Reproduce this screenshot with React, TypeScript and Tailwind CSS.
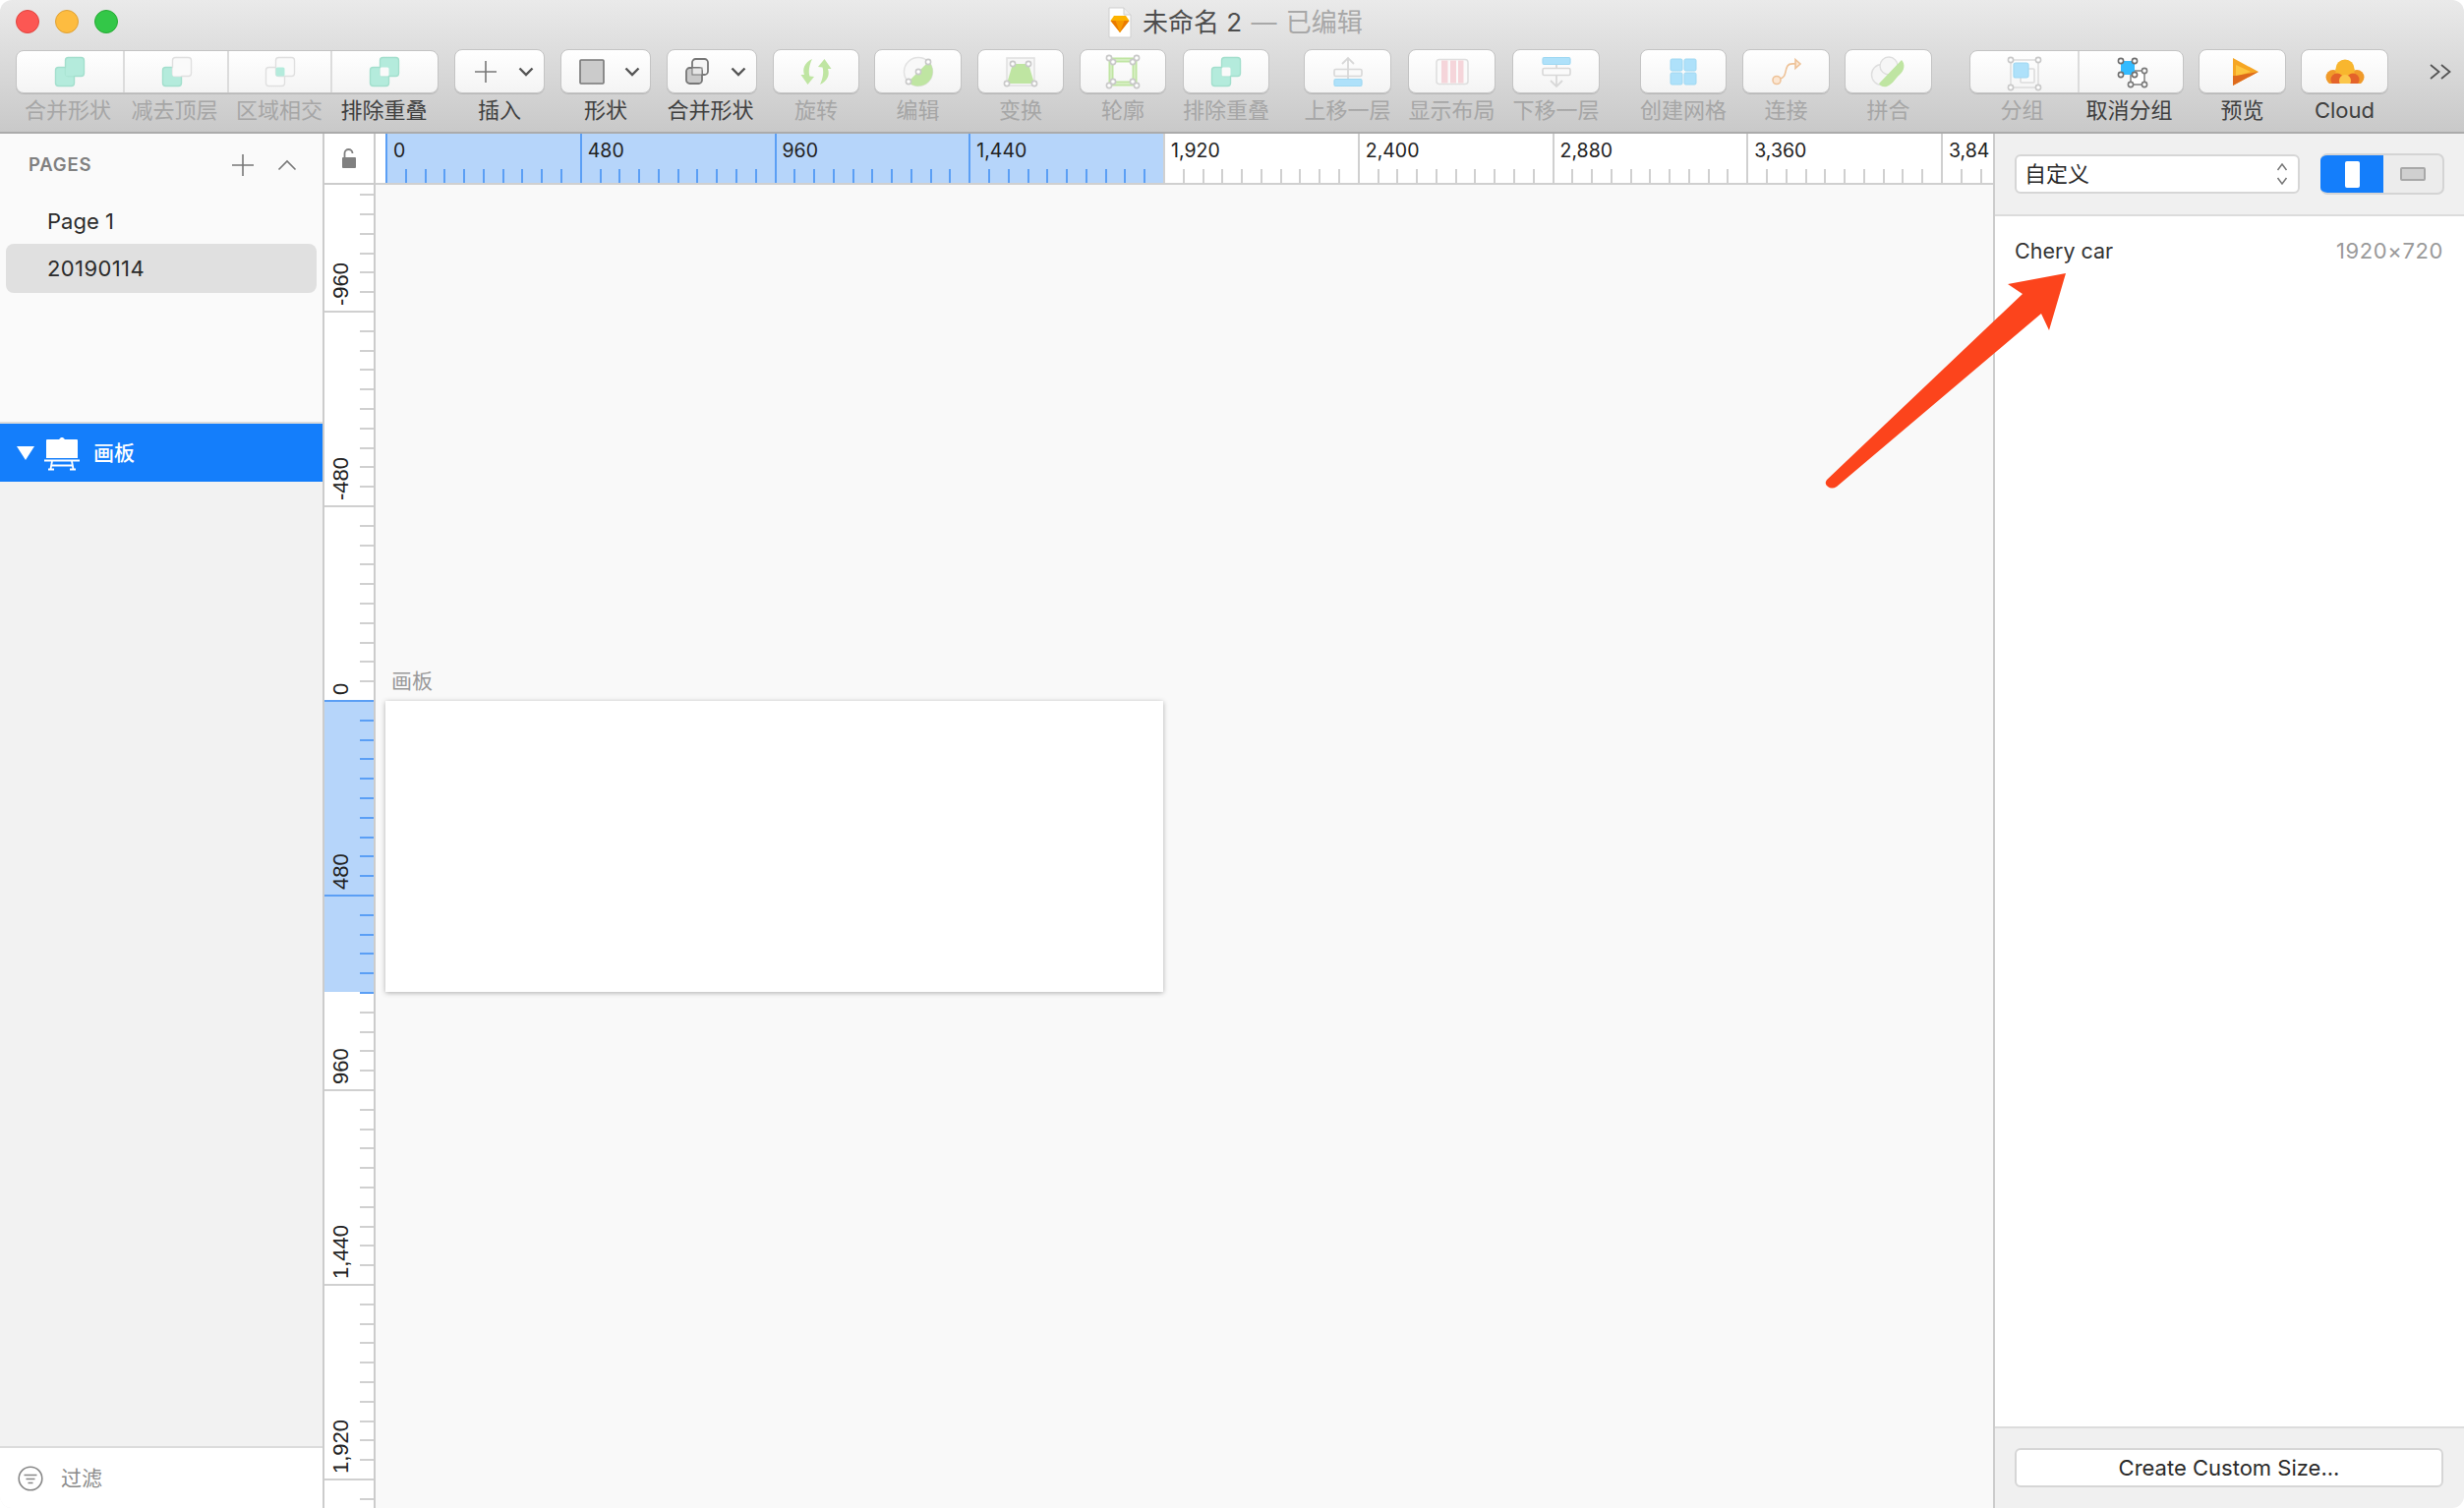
import type { ReactNode } from "react";

const TEAL = "#b4ebdc";
const TEAL_LINE = "#a3dfcd";
const GREEN = "#bfe5a2";
const SKY = "#aee1fa";
const SKY_LINE = "#9fd8f2";
const LINE = "#d8d8d8";

function Icon({ children, size = 40 }: { children: ReactNode; size?: number }) {
  const half = size / 2;
  return (
    <svg width={size} height={size} viewBox={`${-half} ${-half} ${size} ${size}`} className="shrink-0">
      {children}
    </svg>
  );
}

function Node({ x, y, color = "#c9c9c9" }: { x: number; y: number; color?: string }) {
  return <circle cx={x} cy={y} r={2.6} fill="#fff" stroke={color} strokeWidth={1.6} />;
}

function Squares({ a, b, mid, stroke }: { a: string; b: string; mid: string; stroke?: string }) {
  return (
    <Icon>
      <rect x={-14.5} y={-4.5} width={19} height={19} rx={3} fill={a} stroke={a === TEAL ? TEAL_LINE : "#e0e0e0"} strokeWidth={1.4} />
      <rect x={-4.5} y={-14.5} width={19} height={19} rx={3} fill={b} stroke={b === TEAL ? TEAL_LINE : stroke || "#e0e0e0"} strokeWidth={1.4} />
      <rect x={-4.5} y={-4.5} width={9} height={9} rx={1.5} fill={mid} />
    </Icon>
  );
}

const Merge = () => <Squares a={TEAL} b={TEAL} mid={TEAL} />;
const Subtract = () => <Squares a={TEAL} b="#fafafa" mid="#fafafa" />;
const Intersect = () => <Squares a="#fafafa" b="#fafafa" mid={TEAL} />;
const Exclude = () => <Squares a={TEAL} b={TEAL} mid="#fafafa" />;

function Chevron() {
  return (
    <svg width="16" height="10" viewBox="0 0 16 10" className="shrink-0">
      <path d="M1.5 1.5 8 8l6.5-6.5" fill="none" stroke="#555" strokeWidth="2.4" />
    </svg>
  );
}

function Plus() {
  return (
    <svg width="26" height="26" viewBox="0 0 26 26" className="shrink-0">
      <path d="M13 2v22M2 13h22" stroke="#777" strokeWidth="1.6" />
    </svg>
  );
}

function ShapeIcon() {
  return (
    <svg width="26" height="28" viewBox="0 0 26 28" className="shrink-0">
      <rect x="1" y="2" width="24" height="24" fill="#cbcbcb" stroke="#777" strokeWidth="1.6" rx="1" />
    </svg>
  );
}

function CombineIcon() {
  return (
    <svg width="26" height="30" viewBox="0 0 26 30" className="-ml-[1px] shrink-0">
      <rect x="8" y="2" width="16" height="16" rx="3.5" fill="#f6f6f6" stroke="#777" strokeWidth="1.8" />
      <rect x="2" y="11" width="16" height="16" rx="3.5" fill="#c9c9c9" stroke="#777" strokeWidth="1.8" />
      <rect x="8" y="11" width="10" height="7" fill="#e6e6e6" stroke="#777" strokeWidth="1" />
    </svg>
  );
}

function Rotate() {
  const half = "M-4-13C-12-9-14-3-12 3L-15.5 3-8.5 13-2 5-6.5 4.5C-8 0-7-7-4-13Z";
  return (
    <Icon>
      <path d={half} fill={GREEN} />
      <path d={half} fill={GREEN} transform="rotate(180)" />
    </Icon>
  );
}

function Edit() {
  return (
    <Icon>
      <circle r={14.5} fill="#f8f8f8" stroke="#e2e2e2" strokeWidth={1.5} />
      <path d="M-10.6 10.6A15 15 0 0 0 10.6-10.6Z" fill={GREEN} />
      <Node x={-10} y={10} />
      <Node x={0} y={0} />
      <Node x={10} y={-10} />
    </Icon>
  );
}

function Transform() {
  return (
    <Icon>
      <rect x={-14} y={-14} width={28} height={28} fill="#f6f6f6" stroke="#e0e0e0" strokeWidth={1.5} />
      <path d="M-8-8H8L14 12H-14Z" fill={GREEN} />
      <Node x={-8} y={-8} />
      <Node x={8} y={-8} />
      <Node x={-14} y={12} />
      <Node x={14} y={12} />
    </Icon>
  );
}

function Outline() {
  return (
    <Icon>
      <rect x={-12} y={-12} width={24} height={24} fill="none" stroke={GREEN} strokeWidth={5} />
      <path d="M-12-12H12V12H-12Z" fill="none" stroke="#e8f5dc" strokeWidth={1} />
      {[-14, 14].map((x) => [-14, 14].map((y) => <Node key={`${x}${y}`} x={x} y={y} />))}
      {[-10, 10].map((x) => [-10, 10].map((y) => <Node key={`i${x}${y}`} x={x} y={y} />))}
    </Icon>
  );
}

function MoveUp() {
  return (
    <Icon>
      <path d="M0 8V-14M-6-8 0-14 6-8" fill="none" stroke={LINE} strokeWidth={1.8} />
      <rect x={-14} y={-2.5} width={28} height={7} rx={1.5} fill="#fafafa" stroke={LINE} strokeWidth={1.6} />
      <rect x={-14} y={7.5} width={28} height={7} rx={1.5} fill={SKY} stroke={SKY_LINE} strokeWidth={1.2} />
      <path d="M0-2V4" stroke={LINE} strokeWidth={1.8} />
    </Icon>
  );
}

function MoveDown() {
  return (
    <Icon>
      <path d="M0-8V15M-6 9 0 15 6 9" fill="none" stroke={LINE} strokeWidth={1.8} />
      <rect x={-14} y={-14.5} width={28} height={7} rx={1.5} fill={SKY} stroke={SKY_LINE} strokeWidth={1.2} />
      <rect x={-14} y={-3.5} width={28} height={7} rx={1.5} fill="#fafafa" stroke={LINE} strokeWidth={1.6} />
    </Icon>
  );
}

function LayoutIcon() {
  return (
    <Icon>
      <rect x={-16} y={-12.5} width={32} height={25} rx={3} fill="#fafafa" stroke="#dfdfdf" strokeWidth={1.6} />
      <rect x={-11} y={-11.5} width={6.5} height={23} fill="#f5d5da" />
      <rect x={-2} y={-11.5} width={6} height={23} fill="#f5d5da" />
      <rect x={6} y={-11.5} width={5.5} height={23} fill="#f5d5da" />
    </Icon>
  );
}

function Grid() {
  return (
    <Icon>
      {[-13, 1].map((x) =>
        [-13, 1].map((y) => (
          <rect key={`${x}${y}`} x={x} y={y} width={12} height={12} rx={1.5} fill={SKY} stroke={SKY_LINE} strokeWidth={1} />
        )),
      )}
    </Icon>
  );
}

function Connect() {
  return (
    <Icon>
      <path d="M-7 7C0 6-2-1 1-6 3-9 6-8 9-8" fill="none" stroke="#eec298" strokeWidth={1.6} />
      <circle cx={-10} cy={8.5} r={4} fill="#fbe6d2" stroke="#eec298" strokeWidth={1.6} />
      <path d="M9-12.5 14-8 9-3.5Z" fill="#fbe6d2" stroke="#eec298" strokeWidth={1.6} />
    </Icon>
  );
}

function Flatten() {
  return (
    <Icon>
      <circle cx={-7} cy={3} r={10.5} fill="#f6f6f6" stroke="#dedede" strokeWidth={1.4} />
      <circle cx={0} cy={-6} r={9} fill="#f6f6f6" stroke="#dedede" strokeWidth={1.4} />
      <path d="M13-12C17-8 16-1 11 3 7 6 5 12-2 15-6 16-9 14-10 12Z" fill={GREEN} />
    </Icon>
  );
}

function Group() {
  return (
    <Icon>
      <rect x={-14} y={-12} width={28} height={28} fill="none" stroke="#dedede" strokeWidth={1.6} />
      <rect x={-4} y={-3} width={14} height={14} rx={1} fill="#fafafa" stroke="#dcdcdc" strokeWidth={1.6} />
      <rect x={-11} y={-9} width={15} height={15} rx={2} fill={SKY} stroke={SKY_LINE} strokeWidth={1.2} />
      <Node x={-14} y={-12} />
      <Node x={14} y={-12} />
      <Node x={-14} y={16} />
      <Node x={14} y={16} />
    </Icon>
  );
}

function Ungroup() {
  return (
    <Icon>
      <rect x={-1} y={-1} width={14} height={14} fill="#fff" stroke="#888" strokeWidth={1.6} />
      <Node x={13} y={-1} color="#7a7a7a" />
      <Node x={-1} y={13} color="#7a7a7a" />
      <Node x={13} y={13} color="#7a7a7a" />
      <rect x={-11} y={-11} width={14} height={14} fill="#33bbff" />
      {[-11, 3].map((x) => [-11, 3].map((y) => <Node key={`${x}${y}`} x={x} y={y} color="#6f6f6f" />))}
    </Icon>
  );
}

function Preview() {
  return (
    <Icon>
      <path d="M-10-14 16 0-10 14Z" fill="#f6a623" />
      <path d="M-7-7 8 0-7 5Z" fill="#fdc53e" />
      <path d="M-10 14 16 0-7 4-10 4Z" fill="#de6a1c" />
    </Icon>
  );
}

function Cloud() {
  return (
    <Icon>
      <defs>
        <clipPath id="cloud-base">
          <rect x={-20} y={-20} width={40} height={32} />
        </clipPath>
      </defs>
      <g clipPath="url(#cloud-base)">
        <circle cx={-12} cy={5.5} r={7.5} fill="#f09a2a" />
        <circle cx={12} cy={5.5} r={7.5} fill="#f09a2a" />
        <circle cx={0} cy={-3} r={9.5} fill="#f8b62e" />
        <rect x={-9.5} y={-3} width={19} height={16} fill="#f8b62e" />
        <circle cx={-8} cy={8} r={6.5} fill="#e4632a" />
        <circle cx={8} cy={8} r={6.5} fill="#e4632a" />
        <circle cx={0} cy={9} r={6} fill="#fbc64a" />
      </g>
    </Icon>
  );
}

function ToolButton({ label, active, children, className }: { label: string; active?: boolean; children: ReactNode; className: string }) {
  return (
    <div className={`flex shrink-0 flex-col items-center ${className}`}>
      <div className="flex h-[45px] w-full items-center justify-center rounded-[8px] border border-[#c4c4c4] bg-gradient-to-b from-white to-[#f4f4f4] shadow-[0_1px_0_rgba(0,0,0,0.12)]">
        {children}
      </div>
      <span className={`mt-[4px] whitespace-nowrap text-[22px] leading-[26px] ${active ? "text-[#404040]" : "text-[#a6a6a6]"}`}>{label}</span>
    </div>
  );
}

function DropButton({ label, children, className, labelClass = "" }: { label: string; children: ReactNode; className: string; labelClass?: string }) {
  return (
    <div className={`flex shrink-0 flex-col items-center ${className}`}>
      <div className="flex h-[45px] w-full items-center justify-between rounded-[8px] border border-[#c4c4c4] bg-gradient-to-b from-white to-[#f4f4f4] pl-[18px] pr-[10px] shadow-[0_1px_0_rgba(0,0,0,0.12)]">
        {children}
        <Chevron />
      </div>
      <span className={`mt-[4px] whitespace-nowrap text-[22px] leading-[26px] text-[#404040] ${labelClass}`}>{label}</span>
    </div>
  );
}

function Segmented({ items, className }: { items: { label: string; active?: boolean; icon: ReactNode; w: string }[]; className: string }) {
  return (
    <div className={`flex shrink-0 flex-col ${className}`}>
      <div className="mt-[1px] flex h-[44px] overflow-hidden rounded-[8px] border border-[#c4c4c4] bg-gradient-to-b from-white to-[#f4f4f4] shadow-[0_1px_0_rgba(0,0,0,0.12)]">
        {items.map((item, i) => (
          <div key={item.label + i} className={`flex items-center justify-center ${item.w} ${i > 0 ? "border-l-2 border-[#dcdcdc]" : ""} -ml-[1px] first:ml-[-1px]`}>
            {item.icon}
          </div>
        ))}
      </div>
      <div className="ml-[-2px] mt-[4px] flex">
        {items.map((item, i) => (
          <span
            key={item.label + i}
            className={`text-center whitespace-nowrap text-[22px] leading-[26px] ${item.w} ${item.active ? "text-[#404040]" : "text-[#a6a6a6]"}`}
          >
            {item.label}
          </span>
        ))}
      </div>
    </div>
  );
}

function DocIcon() {
  return (
    <svg width="24" height="32" viewBox="0 0 24 32" className="shrink-0">
      <path d="M1 1h15l7 7v23H1Z" fill="#fff" stroke="#cfcfcf" strokeWidth="1" />
      <path d="M16 1v7h7" fill="#eee" stroke="#cfcfcf" strokeWidth="1" />
      <path d="M6 9h12l3.5 5L12 26 2.5 14Z" fill="#fdb300" />
      <path d="M2.5 14h19L12 26Z" fill="#ea7a00" />
      <path d="M7.5 14h9L12 26Z" fill="#f79a00" />
    </svg>
  );
}

function TitleBar() {
  return (
    <div className="flex h-[50px] items-center pl-[16px]">
      <div className="mb-[6px] flex gap-[16px]">
        <span className="size-[24px] rounded-full border border-[#e0443e] bg-[#fc5753]" />
        <span className="size-[24px] rounded-full border border-[#dea034] bg-[#fdbc40]" />
        <span className="size-[24px] rounded-full border border-[#27aa35] bg-[#33c748]" />
      </div>
      <div className="mb-[4px] ml-[1007px] flex items-center gap-[11px] whitespace-nowrap text-[26px] leading-[32px]">
        <DocIcon />
        <span className="text-[#4d4d4d]">
          未命名 2 <span className="ml-[2px] text-[#a8a8a8]">— <span className="ml-[2px]">已编辑</span></span>
        </span>
      </div>
    </div>
  );
}

function Toolbar() {
  return (
    <div className="flex h-[84px] items-start pl-[16px]">
      <Segmented
        className="w-[430px]"
        items={[
          { label: "合并形状", icon: <Merge />, w: "w-[110px]" },
          { label: "减去顶层", icon: <Subtract />, w: "w-[107px]" },
          { label: "区域相交", icon: <Intersect />, w: "w-[106px]" },
          { label: "排除重叠", active: true, icon: <Exclude />, w: "w-[107px]" },
        ]}
      />
      <DropButton label="插入" className="ml-[16px] w-[92px]"><Plus /></DropButton>
      <DropButton label="形状" className="ml-[16px] w-[92px]"><ShapeIcon /></DropButton>
      <DropButton label="合并形状" className="ml-[16px] w-[92px]" labelClass="mr-[3px]"><CombineIcon /></DropButton>
      <ToolButton label="旋转" className="ml-[16px] w-[88px]"><Rotate /></ToolButton>
      <ToolButton label="编辑" className="ml-[15px] w-[89px]"><Edit /></ToolButton>
      <ToolButton label="变换" className="ml-[16px] w-[88px]"><Transform /></ToolButton>
      <ToolButton label="轮廓" className="ml-[16px] w-[88px]"><Outline /></ToolButton>
      <ToolButton label="排除重叠" className="ml-[17px] w-[88px]"><Exclude /></ToolButton>
      <ToolButton label="上移一层" className="ml-[35px] w-[89px]"><MoveUp /></ToolButton>
      <ToolButton label="显示布局" className="ml-[17px] w-[89px]"><LayoutIcon /></ToolButton>
      <ToolButton label="下移一层" className="ml-[17px] w-[89px]"><MoveDown /></ToolButton>
      <ToolButton label="创建网格" className="ml-[41px] w-[88px]"><Grid /></ToolButton>
      <ToolButton label="连接" className="ml-[16px] w-[89px]"><Connect /></ToolButton>
      <ToolButton label="拼合" className="ml-[15px] w-[89px]"><Flatten /></ToolButton>
      <Segmented
        className="ml-[38px] w-[218px]"
        items={[
          { label: "分组", icon: <Group />, w: "w-[111px]" },
          { label: "取消分组", active: true, icon: <Ungroup />, w: "w-[107px]" },
        ]}
      />
      <ToolButton label="预览" active className="ml-[15px] w-[89px]"><Preview /></ToolButton>
      <ToolButton label="Cloud" active className="ml-[15px] w-[89px]"><Cloud /></ToolButton>
      <svg width="23" height="16" viewBox="0 0 23 16" className="ml-[42px] mt-[15px] shrink-0">
        <path d="M1 1 9.5 8 1 15M12 1 20.5 8 12 15" fill="none" stroke="#555" strokeWidth="1.8" />
      </svg>
    </div>
  );
}

function Sidebar() {
  return (
    <aside className="flex w-[330px] shrink-0 flex-col border-r-2 border-[#cccccc] bg-[#f2f2f2]">
      <div className="h-[295px] border-b-2 border-[#dcdcdc] bg-[#fafafa]">
        <div className="flex h-[63px] items-center pl-[29px] pr-[26px]">
          <span className="flex-1 text-[18.5px] font-semibold tracking-[0.8px] text-[#808080]">PAGES</span>
          <svg width="24" height="24" viewBox="0 0 24 24">
            <path d="M12 1v22M1 12h22" stroke="#777" strokeWidth="1.6" />
          </svg>
          <svg width="20" height="12" viewBox="0 0 20 12" className="ml-[23px]">
            <path d="M1.5 10.5 10 2l8.5 8.5" fill="none" stroke="#777" strokeWidth="1.6" />
          </svg>
        </div>
        <div className="flex h-[49px] items-center pl-[48px] pt-[3px] text-[22px] text-[#2b2b2b]">Page 1</div>
        <div className="mx-[6px] flex h-[50px] items-center rounded-[8px] bg-[#e0e0e0] pl-[42px] pt-[1px] text-[22px] tracking-[0.4px] text-[#2b2b2b]">20190114</div>
      </div>
      <div className="flex h-[59px] items-center bg-[#147efb] pl-[17px] text-white">
        <svg width="18" height="14" viewBox="0 0 18 14">
          <path d="M0 0h18L9 14Z" fill="#fff" />
        </svg>
        <svg width="36" height="36" viewBox="0 0 36 36" className="ml-[10px]">
          <path d="M3 4h12l2-2h2l2 2h12a1 1 0 0 1 1 1v18H2V5a1 1 0 0 1 1-1Z" fill="#fff" />
          <path d="M0 25.5h36" stroke="#fff" strokeWidth="2" />
          <path d="M8 26 6.5 34M28 26 29.5 34M7 30.5h22M4 34.5h6M26 34.5h6" stroke="#fff" strokeWidth="1.8" fill="none" />
        </svg>
        <span className="ml-[14px] text-[21px] font-medium leading-none">画板</span>
      </div>
      <div className="flex-1" />
      <div className="flex h-[63px] items-center border-t-2 border-[#dcdcdc] bg-white pl-[18px]">
        <svg width="26" height="26" viewBox="0 0 26 26">
          <circle cx="13" cy="13" r="11.8" fill="none" stroke="#888" strokeWidth="1.6" />
          <path d="M6.5 9.5h13M8.5 13.5h9M10.5 17.5h5" stroke="#888" strokeWidth="1.6" />
        </svg>
        <span className="ml-[18px] text-[21px] text-[#8a8a8a]">过滤</span>
      </div>
    </aside>
  );
}

const H_LABELS = ["0", "480", "960", "1,440", "1,920", "2,400", "2,880", "3,360", "3,84"];
const V_LABELS = ["-960", "-480", "0", "480", "960", "1,440", "1,920"];
const BLUE_LINE = "#5b9ff5";
const GREY_LINE = "#d0d0d0";

function HorizontalRuler() {
  const ticks: ReactNode[] = [];
  for (let i = 0; i < 84; i++) {
    const x = Math.round(10 + i * 19.775);
    const blue = x <= 800;
    const major = i % 10 === 0;
    ticks.push(<line key={i} x1={x + 1} x2={x + 1} y1={major ? 0 : 36} y2={50} stroke={blue ? BLUE_LINE : GREY_LINE} strokeWidth={2} />);
  }
  return (
    <div className="relative h-[52px] flex-1 overflow-hidden border-b-2 border-[#d0d0d0] bg-white">
      <div className="absolute bottom-[-2px] left-[10px] h-[52px] w-[791px] border-b-2 border-[#4a90e8] bg-[#b6d5fa]" />
      <svg width="1645" height="52" className="absolute left-0 top-0">
        {ticks}
      </svg>
      {H_LABELS.map((label, i) => (
        <span
          key={label}
          className="absolute top-[4px] font-[Inter,sans-serif] text-[19.5px] leading-[26px] text-[#222]"
          style={{ left: 18 + i * 197.75 }}
        >
          {label}
        </span>
      ))}
    </div>
  );
}

function VerticalRuler() {
  const ticks: ReactNode[] = [];
  for (let i = 0; i < 70; i++) {
    const y = Math.round(129 - 198 * 0.6 + i * 19.8);
    const blue = y >= 525 && y <= 822;
    const major = (i - 6) % 10 === 0;
    ticks.push(<line key={i} x1={major ? 0 : 36} x2={50} y1={y} y2={y} stroke={blue ? BLUE_LINE : GREY_LINE} strokeWidth={2} />);
  }
  return (
    <div className="relative w-[52px] shrink-0 overflow-hidden border-r-2 border-[#cccccc] bg-white">
      <div className="absolute left-0 top-[525px] h-[296px] w-[52px] border-r-2 border-[#5b9ff5] bg-[#b6d5fa]" />
      <svg width="50" height="1346" className="absolute left-0 top-0">
        {ticks}
      </svg>
      {V_LABELS.map((label, i) => (
        <span
          key={label}
          className="absolute left-[17px] -translate-x-1/2 -translate-y-full rotate-180 whitespace-nowrap font-['Liberation_Sans',sans-serif] text-[22px] leading-[24px] text-[#222] [writing-mode:vertical-rl]"
          style={{ top: 123 + i * 198 }}
        >
          {label}
        </span>
      ))}
    </div>
  );
}

function Canvas() {
  return (
    <main className="flex min-w-0 flex-1 flex-col">
      <div className="flex">
        <div className="flex h-[52px] w-[52px] shrink-0 items-center justify-center border-b-2 border-r-2 border-[#cccccc] bg-white">
          <svg width="16" height="22" viewBox="0 0 16 22">
            <path d="M3.5 10V6a4 4 0 0 1 8 0" fill="none" stroke="#808080" strokeWidth="1.8" />
            <rect x="1" y="10" width="14" height="11" rx="1" fill="#808080" />
          </svg>
        </div>
        <HorizontalRuler />
      </div>
      <div className="flex min-h-0 flex-1">
        <VerticalRuler />
        <div className="flex-1 bg-[#f9f9f9] pl-[10px] pt-[492px]">
          <div className="ml-[6px] h-[26px] text-[21px] leading-[26px] text-[#999]">画板</div>
          <div className="mt-[7px] h-[296px] w-[791px] bg-white shadow-[0_1px_5px_rgba(0,0,0,0.3)]" />
        </div>
      </div>
    </main>
  );
}

function RightPanel() {
  return (
    <aside className="flex w-[479px] shrink-0 flex-col border-l-2 border-[#cccccc] bg-white">
      <div className="flex h-[84px] items-center border-b-2 border-[#dcdcdc] bg-[#f0f0f0] pl-[20px]">
        <div className="flex h-[40px] w-[290px] items-center justify-between rounded-[6px] border-2 border-[#d6d6d6] bg-white pl-[8px] pr-[10px] text-[22px] text-[#2b2b2b]">
          自定义
          <svg width="12" height="26" viewBox="0 0 12 26">
            <path d="M1.5 9 6 3l4.5 6M1.5 17 6 23l4.5-6" fill="none" stroke="#777" strokeWidth="1.5" />
          </svg>
        </div>
        <div className="ml-[21px] flex h-[42px] w-[126px] overflow-hidden rounded-[7px] border-r-2 border-t-2 border-b-2 border-[#d4d4d4] bg-[#ececec]">
          <div className="my-[-2px] flex w-[64px] items-center justify-center bg-[#147efb]">
            <span className="h-[27px] w-[15px] rounded-[2px] bg-white" />
          </div>
          <div className="flex flex-1 items-center justify-center">
            <span className="h-[14px] w-[26px] rounded-[2px] border-2 border-[#a8a8a8] bg-[#d0d0d0]" />
          </div>
        </div>
      </div>
      <div className="flex-1 px-[20px] pr-[21px] pt-[20px]">
        <div className="flex h-[30px] items-center justify-between">
          <span className="text-[21.5px] text-[#333]">Chery car</span>
          <span className="text-[22px] tracking-[0.6px] text-[#9a9a9a]">1920×720</span>
        </div>
      </div>
      <div className="h-[83px] border-t-2 border-[#dcdcdc] bg-[#f0f0f0] pl-[20px] pr-[21px] pt-[20px]">
        <div className="flex h-[40px] items-center justify-center rounded-[6px] border-2 border-[#d6d6d6] bg-white text-[22px] text-[#2b2b2b]">
          Create Custom Size...
        </div>
      </div>
    </aside>
  );
}

export default function App() {
  return (
    <div className="relative flex h-[1534px] w-[2506px] flex-col overflow-hidden rounded-[12px] bg-white font-[Inter,'Noto_Sans_CJK_SC',sans-serif]">
      <header className="h-[136px] shrink-0 border-b-2 border-[#ababab] bg-gradient-to-b from-[#eaeaea] to-[#c9c9c9]">
        <TitleBar />
        <Toolbar />
      </header>
      <div className="flex min-h-0 flex-1">
        <Sidebar />
        <Canvas />
        <RightPanel />
      </div>
      {/* annotation arrow drawn over the window */}
      <svg width="2506" height="1534" className="pointer-events-none absolute left-0 top-0">
        <path
          d="M2101 278 2042 289 2057 299 1858 488Q1855 492 1859 495 1863 498 1868 495L2076 319 2084 336Z"
          fill="#fc441c"
        />
      </svg>
    </div>
  );
}
